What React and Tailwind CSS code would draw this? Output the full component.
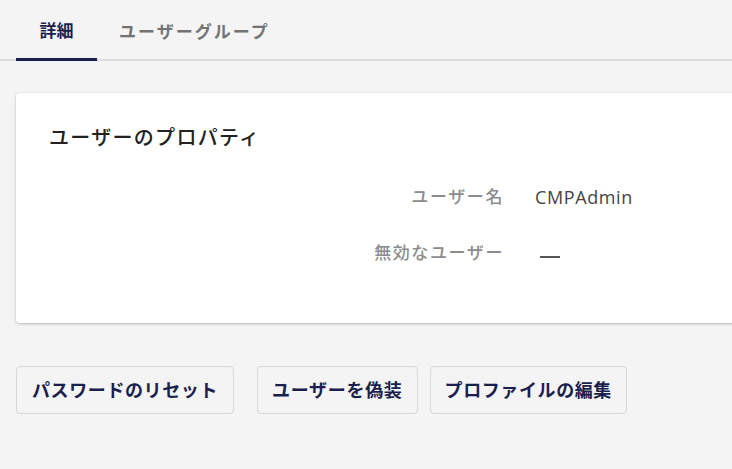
import React from 'react';

const jp = { fontFamily: '"Open Sans", "Noto Sans CJK JP", sans-serif' };

const Row = ({ label, children }) => (
  <div className="flex items-center h-[56px]">
    <div className="w-[488px] text-right text-[17px] tracking-[1.6px] text-[#8c8c8c] font-medium">{label}</div>
    <div className="ml-[31px] text-[18px] tracking-[0.6px] text-[#444]">{children}</div>
  </div>
);

const App = () => {
  return (
    <div className="w-[732px] h-[469px] overflow-hidden bg-[#f4f4f4]" style={jp}>
      {/* tabs */}
      <div className="flex h-[61px] border-b-2 border-[#dddddd]">
        <div className="w-[81px] ml-[16px] flex items-center justify-center text-[17px] font-bold text-[#1b1f4e] border-b-[3px] border-[#1b1f4e] -mb-[2px] pt-[3px]">
          詳細
        </div>
        <div className="ml-[22px] flex items-center text-[17px] font-bold tracking-[2px] text-[#737373] pt-[3px] -mb-[2px]">
          ユーザーグループ
        </div>
      </div>

      {/* properties card */}
      <div className="mt-[32px] ml-[16px] w-[740px] h-[230px] bg-white rounded-[4px] shadow-[0_1px_3px_rgba(0,0,0,0.25)] pt-[30px]">
        <div className="ml-[33px] text-[20px] tracking-[1.3px] font-medium text-[#222]">ユーザーのプロパティ</div>
        <div className="mt-[16px]">
          <Row label="ユーザー名">CMPAdmin</Row>
          <Row label="無効なユーザー">
            <span className="block w-[20px] h-[2px] bg-[#555] ml-[5px] mt-[8px]" />
          </Row>
        </div>
      </div>

      {/* actions */}
      <div className="flex mt-[43px] ml-[16px]">
        <button className="h-[48px] px-[15px] mr-[23px] border border-[#d6d6d6] rounded-[4px] text-[18px] tracking-[0.6px] font-bold text-[#1b1f4e]">
          パスワードのリセット
        </button>
        <button className="h-[48px] px-[14px] mr-[12px] border border-[#d6d6d6] rounded-[4px] text-[18px] tracking-[0.7px] font-bold text-[#1b1f4e]">
          ユーザーを偽装
        </button>
        <button className="h-[48px] px-[14px] border border-[#d6d6d6] rounded-[4px] text-[18px] tracking-[0.6px] font-bold text-[#1b1f4e]">
          プロファイルの編集
        </button>
      </div>
    </div>
  );
};

export default App;
